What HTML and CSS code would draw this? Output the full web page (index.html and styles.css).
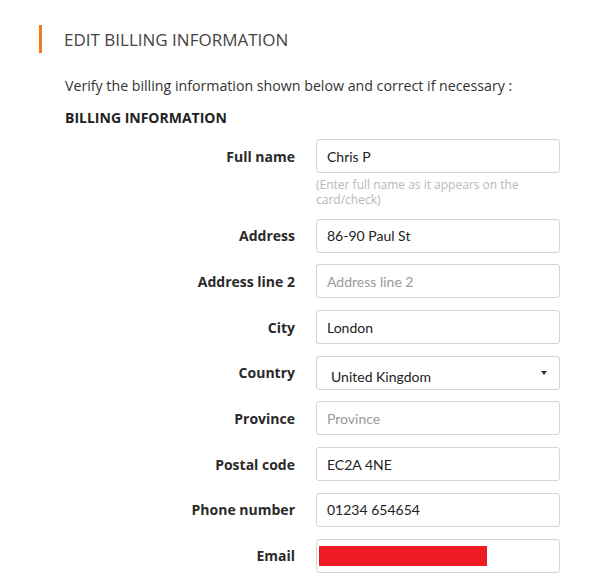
FILE: index.html
```html
<!DOCTYPE html>
<html>
<head>
<meta charset="utf-8">
<link rel="stylesheet" href="styles.css">
</head>
<body>
<div class="page">
  <div class="heading">EDIT BILLING INFORMATION</div>
  <div class="body">
    <p class="intro">Verify the billing information shown below and correct if necessary :</p>
    <h2 class="section-title">BILLING INFORMATION</h2>
    <div class="form">
      <label class="label">Full name</label>
      <div class="field">
        <div class="input">Chris P</div>
        <div class="hint">(Enter full name as it appears on the card/check)</div>
      </div>
      <label class="label">Address</label>
      <div class="field"><div class="input">86-90 Paul St</div></div>
      <label class="label">Address line 2</label>
      <div class="field"><div class="input placeholder">Address line 2</div></div>
      <label class="label">City</label>
      <div class="field"><div class="input">London</div></div>
      <label class="label">Country</label>
      <div class="field"><div class="input select"><span class="select-value">United Kingdom</span><span class="caret"></span></div></div>
      <label class="label">Province</label>
      <div class="field"><div class="input placeholder">Province</div></div>
      <label class="label">Postal code</label>
      <div class="field"><div class="input">EC2A 4NE</div></div>
      <label class="label">Phone number</label>
      <div class="field"><div class="input">01234 654654</div></div>
      <label class="label">Email</label>
      <div class="field"><div class="input email"><span class="redact"></span></div></div>
    </div>
  </div>
</div>
</body>
</html>
```
FILE: styles.css
```css
html, body {
  margin: 0;
  padding: 0;
  background: #fff;
}
body {
  font-family: "Open Sans", Lato, "Liberation Sans", sans-serif;
  color: #333;
}
.page {
  padding: 25px 0 0 39px;
}
.heading {
  height: 28px;
  display: flex;
  align-items: center;
  border-left: 3px solid #f47a20;
  padding-left: 22px;
  font-size: 17px;
  color: #444;
}
.body {
  padding-left: 26px;
}
.intro {
  margin: 23px 0 0;
  font-size: 14.2px;
  line-height: 20px;
  color: #333;
}
.section-title {
  margin: 12px 0 0;
  font-size: 14px;
  line-height: 20px;
  font-weight: 700;
  color: #222;
}
.form {
  margin-top: 11px;
  display: grid;
  grid-template-columns: 230px 244px;
  column-gap: 21px;
  row-gap: 11.7px;
  align-items: start;
}
.label {
  height: 34px;
  display: flex;
  align-items: center;
  justify-content: flex-end;
  font-size: 14px;
  font-weight: 700;
  color: #2a2a2a;
}
.input {
  height: 34px;
  box-sizing: border-box;
  border: 1px solid #d4d4d4;
  border-radius: 3px;
  padding: 0 10px;
  display: flex;
  align-items: center;
  font-family: Lato, "Open Sans", sans-serif;
  font-size: 14px;
  color: #222;
}
.placeholder {
  color: #9a9a9a;
}
.hint {
  margin-top: 4px;
  font-size: 12px;
  line-height: 15px;
  color: #b8b8b8;
  padding-right: 20px;
}
.select {
  justify-content: space-between;
  padding: 0 12px 0 14px;
}
.select-value {
  padding-top: 8px;
}
.caret {
  width: 0;
  height: 0;
  border-left: 3.5px solid transparent;
  border-right: 3.5px solid transparent;
  border-top: 4px solid #333;
}
.email {
  padding: 0 2px;
}
.redact {
  width: 168px;
  height: 20px;
  background: #ed1c24;
}
```
